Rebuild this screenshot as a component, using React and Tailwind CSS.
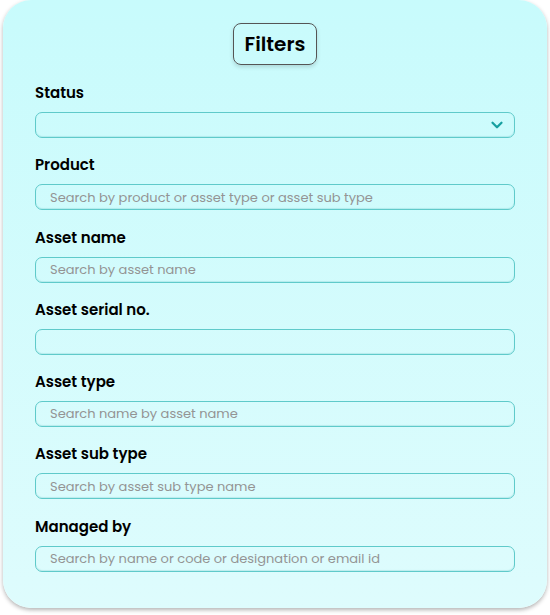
import { ChevronDown } from "lucide-react";

const fields = [
    { label: "Product", placeholder: "Search by product or asset type or asset sub type" },
    { label: "Asset name", placeholder: "Search by asset name" },
    { label: "Asset serial no.", placeholder: "" },
    { label: "Asset type", placeholder: "Search name by asset name" },
    { label: "Asset sub type", placeholder: "Search by asset sub type name" },
    { label: "Managed by", placeholder: "Search by name or code or designation or email id" },
];

function Field({ label, children }) {
    return (
        <div className="flex flex-col">
            <div className="h-[20px] text-[15px] leading-[20px] font-semibold text-black">{label}</div>
            <div className="mt-[9px]">{children}</div>
        </div>
    );
}

export default function App() {
    return (
        <div
            className="w-[550px] h-[615px] bg-white pt-0 px-[3px]"
            style={{ fontFamily: "Poppins, Inter, 'Noto Sans', sans-serif" }}
        >
            <div className="h-[608px] rounded-[28px] bg-gradient-to-b from-[#c8fbfc] to-[#defcfd] shadow-[0_2px_4px_rgba(0,0,0,0.3)] px-[32px] pt-[23px]">
                <div className="flex justify-center">
                    <div className="w-[84px] h-[42px] rounded-[8px] border border-[#555] flex items-center justify-center text-[20px] font-semibold text-black shadow-[0_2px_4px_rgba(0,0,0,0.15)]">
                        Filters
                    </div>
                </div>
                <div className="mt-[18px] flex flex-col gap-[17.3px]">
                    <Field label="Status">
                        <div className="h-[26px] rounded-[7px] border border-[#5fcaca] flex items-center justify-end pr-[8px] shadow-[inset_0_-1px_1px_rgba(0,150,150,0.15)]">
                            <ChevronDown className="w-[18px] h-[18px] text-[#16a0a0]" strokeWidth={3} />
                        </div>
                    </Field>
                    {fields.map((f) => (
                        <Field key={f.label} label={f.label}>
                            <div className="h-[26px] rounded-[7px] border border-[#5fcaca] flex items-center px-[14px] text-[13px] text-[#949494] shadow-[inset_0_-1px_1px_rgba(0,150,150,0.15)]">
                                {f.placeholder}
                            </div>
                        </Field>
                    ))}
                </div>
            </div>
        </div>
    );
}
